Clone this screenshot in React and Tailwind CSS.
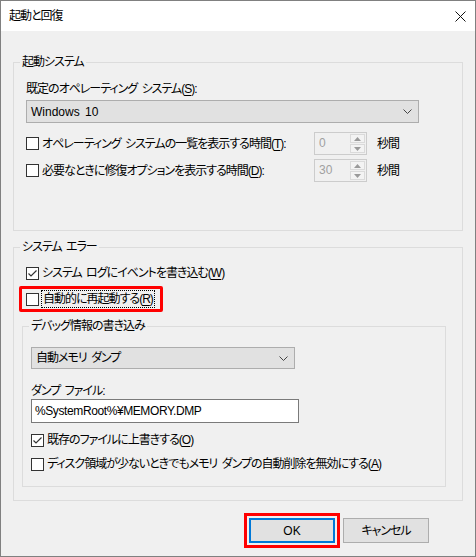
import React from "react";

const font = "[font-family:'Liberation_Sans','Noto_Sans_CJK_JP',sans-serif] [font-feature-settings:'palt'] tracking-[-1px] [word-spacing:2px]";

function Key({ children }) {
  return <span className="underline underline-offset-2">{children}</span>;
}

function CheckBox({ checked }) {
  return (
    <span className="flex h-[13px] w-[13px] shrink-0 items-center justify-center border border-[#333333] bg-white">
      {checked && (
        <svg width="11" height="11" viewBox="0 0 11 11">
          <polyline points="1.5,5.5 4,8 9.5,2.5" fill="none" stroke="#333333" strokeWidth="1.2" />
        </svg>
      )}
    </span>
  );
}

function Chevron() {
  return (
    <svg width="9" height="5" viewBox="0 0 9 5">
      <polyline points="0.5,0.5 4.5,4.5 8.5,0.5" fill="none" stroke="#444444" strokeWidth="1" />
    </svg>
  );
}

function Select({ children, className }) {
  return (
    <div className={"flex items-center justify-between border border-[#adadad] bg-[#e1e1e1] pl-[4px] pr-[6px] " + className}>
      <span>{children}</span>
      <Chevron />
    </div>
  );
}

function Spin({ value }) {
  return (
    <div className="flex h-[23px] w-[53px] border border-[#cccccc] bg-[#f0f0f0]">
      <span className="flex-1 pl-[4px] leading-[21px] tracking-normal text-[#a0a0a0]">{value}</span>
      <div className="flex w-[17px] flex-col gap-[1px] p-[1px]">
        <div className="flex flex-1 items-center justify-center border border-[#dadada] bg-[#f3f3f3]">
          <svg width="7" height="4" viewBox="0 0 7 4"><polygon points="0,4 3.5,0 7,4" fill="#9a9a9a" /></svg>
        </div>
        <div className="flex flex-1 items-center justify-center border border-[#dadada] bg-[#f3f3f3]">
          <svg width="7" height="4" viewBox="0 0 7 4"><polygon points="0,0 7,0 3.5,4" fill="#9a9a9a" /></svg>
        </div>
      </div>
    </div>
  );
}

function Group({ label, className, children }) {
  return (
    <div className={"relative border border-[#dcdcdc] " + className}>
      <span className="absolute left-[6px] top-[-9px] bg-[#f0f0f0] px-[2px] leading-[16px]">{label}</span>
      {children}
    </div>
  );
}

function TimeRow({ label, value, className }) {
  return (
    <div className={"flex h-[23px] items-center " + className}>
      <CheckBox />
      <span className="ml-[3px] w-[272px] shrink-0">{label}</span>
      <Spin value={value} />
      <span className="ml-[10px]">秒間</span>
    </div>
  );
}

export default function App() {
  return (
    <div className={"flex h-[557px] w-[476px] flex-col border border-[#808080] bg-[#f0f0f0] text-[12px] text-black " + font}>
      <div className="flex h-[30px] shrink-0 items-center justify-between bg-white pl-[8px] pr-[9px]">
        <span>起動と回復</span>
        <svg width="11" height="11" viewBox="0 0 11 11">
          <path d="M0.5 0.5 L10.5 10.5 M10.5 0.5 L0.5 10.5" stroke="#111111" strokeWidth="1" />
        </svg>
      </div>

      <Group label="起動システム" className="mx-[12px] mt-[31px] h-[169px] pl-[12px]">
        <div className="mt-[18px] leading-[16px]">既定のオペレーティング システム(<Key>S</Key>):</div>
        <Select className="mt-[3px] h-[23px] w-[393px] tracking-normal">Windows 10</Select>
        <TimeRow className="mt-[9px]" value="0" label={<>オペレーティング システムの一覧を表示する時間(<Key>T</Key>):</>} />
        <TimeRow className="mt-[4px]" value="30" label={<>必要なときに修復オプションを表示する時間(<Key>D</Key>):</>} />
      </Group>

      <Group label="システム エラー" className="mx-[12px] mt-[16px] h-[254px]">
        <div className="ml-[12px] mt-[17px] flex h-[16px] items-center">
          <CheckBox checked />
          <span className="ml-[3px]">システム ログにイベントを書き込む(<Key>W</Key>)</span>
        </div>
        <div className="relative ml-[12px] mt-[9px] flex h-[18px] w-fit items-center">
          <CheckBox />
          <span className="ml-[2px] border border-dotted border-black px-[1px] leading-[16px]">自動的に再起動する(<Key>R</Key>)</span>
          <div className="absolute left-[-7px] top-[-4px] h-[26px] w-[144px] rounded-[2px] border-[3px] border-[#ff0000]" />
        </div>

        <Group label="デバッグ情報の書き込み" className="ml-[8px] mt-[18px] h-[161px] w-[424px] pl-[8px]">
          <Select className="mt-[20px] h-[22px] w-[264px]">自動メモリ ダンプ</Select>
          <div className="mt-[14px] leading-[16px]">ダンプ ファイル:</div>
          <div className="h-[24px] w-[268px] border border-[#7a7a7a] bg-white pl-[3px] leading-[22px] tracking-[-0.4px]">%SystemRoot%¥MEMORY.DMP</div>
          <div className="mt-[9px] flex h-[16px] items-center">
            <CheckBox checked />
            <span className="ml-[3px]">既存のファイルに上書きする(<Key>O</Key>)</span>
          </div>
          <div className="mt-[8px] flex h-[16px] items-center">
            <CheckBox />
            <span className="ml-[3px]">ディスク領域が少ないときでもメモリ ダンプの自動削除を無効にする(<Key>A</Key>)</span>
          </div>
        </Group>
      </Group>

      <div className="mt-[17px] flex justify-end gap-[8px] pr-[46px]">
        <button className="h-[25px] w-[86px] border-2 border-[#0078d7] bg-[#e1e1e1] tracking-normal outline-[3px] outline-offset-[2px] outline-[#ff0000] [outline-style:solid]">OK</button>
        <button className="h-[25px] w-[86px] border border-[#adadad] bg-[#e1e1e1]">キャンセル</button>
      </div>
    </div>
  );
}
